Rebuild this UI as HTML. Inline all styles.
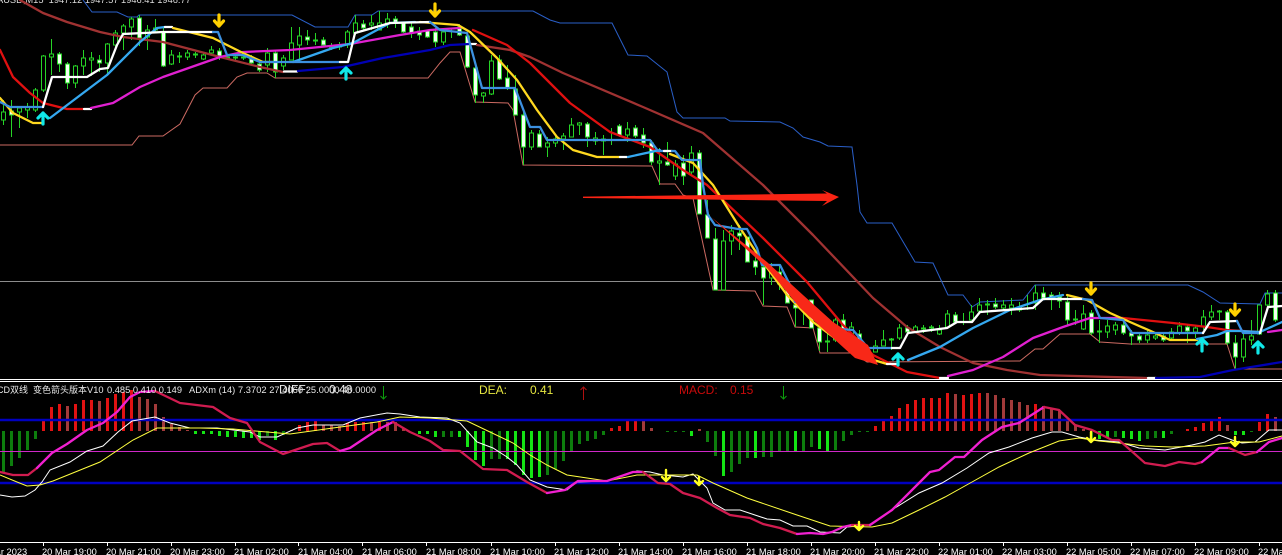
<!DOCTYPE html>
<html lang="zh">
<head>
<meta charset="utf-8">
<title>XAUUSD M15</title>
<style>
html,body{margin:0;padding:0;background:#000;width:1282px;height:555px;overflow:hidden}
svg{display:block}
text{font-family:"Liberation Sans","Noto Sans CJK SC",sans-serif}
.ax text{font-size:9.3px;fill:#fff}
</style>
</head>
<body>
<svg width="1282" height="555" viewBox="0 0 1282 555" xmlns="http://www.w3.org/2000/svg" fill="none">
<rect width="1282" height="555" fill="#000"/>
<text x="-3" y="3" fill="#ddd" style="font-size:9.3px">AUSD,M15&#160;&#160;1947.12 1947.57 1946.41 1946.77</text>

<!-- grey level -->
<path d="M0 281.5H1282" stroke="#8c8c8c"/>

<!-- channels -->
<polyline stroke="#2a5fc8" points="83,0 92,12 117,12 128,17 137,17 139,15 292,15 315,27 348,27 355,15 372,15 378,11 533,11 550,20 560,23 612,23 628,55 647,56 667,72 677,112 683,118 725,118 730,121 780,122 793,128 803,137 820,142 828,146 852,147 857,185 860,212 867,223 892,223 915,262 933,263 948,295 963,295 972,307 980,302 1023,300 1035,285 1188,285 1203,292 1220,303 1260,304 1265,293 1282,293"/>
<polyline stroke="#cc6a62" points="0,145 132,145 139,136 163,136 180,124 195,95 203,88 227,88 237,77 247,73 267,73 275,78 428,78 440,63 450,52 460,52 475,102 508,103 513,110 523,165 652,166 660,184 675,184 683,195 693,198 713,290 755,291 763,306 787,307 795,327 813,328 820,353 853,353 867,362 1020,361 1035,349 1043,349 1060,334 1090,334 1100,342 1130,344 1227,344 1235,369 1282,369"/>

<!-- candles: wicks -->
<path stroke="#26d426" d="M3.5 100V125M11.5 100V137M19.5 108V128M27.5 103V118M35.5 88V112M43.5 55V92M51.5 39V75M59.5 52V72M67.5 62V89M75.5 65V88M83.5 50V75M91.5 52V76M99.5 55V72M107.5 43V73M115.5 30V50M123.5 24V50M131.5 17V40M139.5 15V46M147.5 25V50M155.5 19V33M163.5 28V67M171.5 50V65M179.5 52V63M187.5 50V60M195.5 52V58M203.5 52V60M211.5 46V55M219.5 48V60M227.5 54V60M235.5 55V60M243.5 53V60M251.5 55V65M259.5 60V72M267.5 48V72M275.5 50V78M283.5 55V70M291.5 27V60M299.5 27V62M307.5 30V45M315.5 33V45M323.5 37V46M331.5 43V50M339.5 42V50M347.5 30V48M355.5 15V35M363.5 20V30M371.5 15V30M379.5 11V30M387.5 13V28M395.5 16V28M403.5 22V33M411.5 22V38M419.5 27V40M427.5 30V38M435.5 28V47M443.5 30V45M451.5 28V38M459.5 24V36M467.5 33V68M475.5 65V103M483.5 92V103M491.5 55V95M499.5 55V80M507.5 65V90M515.5 75V115M523.5 112V165M531.5 130V150M539.5 130V147M547.5 137V157M555.5 135V147M563.5 133V150M571.5 118V137M579.5 122V135M587.5 122V147M595.5 132V145M603.5 135V155M611.5 128V145M619.5 124V137M627.5 122V142M635.5 125V138M643.5 128V148M651.5 140V165M659.5 148V185M667.5 142V166M675.5 160V180M683.5 155V185M691.5 146V175M699.5 150V214M707.5 200V238M715.5 228V290M723.5 230V290M731.5 225V255M739.5 225V250M747.5 237V262M755.5 255V275M763.5 260V305M771.5 263V285M779.5 265V290M787.5 285V303M795.5 302V327M803.5 303V325M811.5 300V328M819.5 328V351M827.5 325V352M835.5 318V342M843.5 314V335M851.5 322V348M859.5 330V352M875.5 340V352M883.5 330V346M891.5 338V350M899.5 324V340M907.5 325V335M915.5 325V333M923.5 325V333M931.5 325V332M939.5 325V335M947.5 310V327M955.5 312V324M963.5 313V325M971.5 305V320M979.5 298V312M987.5 300V315M995.5 298V309M1003.5 300V310M1011.5 298V315M1019.5 302V312M1027.5 295V310M1035.5 285V310M1043.5 287V300M1051.5 292V310M1059.5 292V308M1067.5 295V325M1075.5 310V325M1083.5 305V330M1091.5 310V335M1099.5 320V343M1107.5 320V338M1115.5 322V335M1123.5 320V335M1131.5 330V345M1139.5 332V343M1147.5 330V343M1155.5 333V340M1163.5 333V342M1171.5 328V340M1179.5 322V335M1187.5 325V343M1195.5 326V338M1203.5 310V330M1211.5 305V320M1219.5 310V320M1227.5 310V345M1235.5 335V369M1243.5 330V362M1251.5 320V345M1259.5 305V335M1267.5 290V310M1275.5 290V322"/>
<!-- hollow bodies -->
<path fill="#000" stroke="#26d426" d="M1.5 112h4v8h-4zM17.5 108h4v4h-4zM25.5 107h4v3h-4zM33.5 90h4v20h-4zM41.5 56h4v34h-4zM49.5 54h4v3h-4zM73.5 66h4v17h-4zM81.5 58h4v8h-4zM89.5 58h4v2h-4zM105.5 44h4v19h-4zM113.5 33h4v12h-4zM121.5 26h4v7h-4zM129.5 19h4v8h-4zM145.5 30h4v7h-4zM153.5 28h4v2h-4zM169.5 55h4v9h-4zM177.5 56h4v1h-4zM185.5 53h4v4h-4zM193.5 54h4v1h-4zM201.5 55h4v4h-4zM209.5 50h4v3h-4zM225.5 57h4v1h-4zM233.5 57h4v1h-4zM241.5 57h4v1h-4zM265.5 53h4v12h-4zM281.5 58h4v8h-4zM289.5 43h4v17h-4zM297.5 36h4v9h-4zM313.5 40h4v1h-4zM345.5 32h4v13h-4zM353.5 23h4v10h-4zM369.5 23h4v2h-4zM377.5 23h4v7h-4zM385.5 19h4v4h-4zM441.5 32h4v10h-4zM481.5 93h4v3h-4zM489.5 61h4v33h-4zM529.5 133h4v14h-4zM545.5 143h4v4h-4zM553.5 139h4v4h-4zM561.5 136h4v3h-4zM569.5 125h4v12h-4zM577.5 123h4v2h-4zM593.5 138h4v3h-4zM601.5 139h4v2h-4zM625.5 129h4v6h-4zM657.5 161h4v2h-4zM673.5 164h4v12h-4zM689.5 153h4v19h-4zM721.5 241h4v49h-4zM729.5 231h4v10h-4zM769.5 270h4v8h-4zM801.5 305h4v5h-4zM833.5 320h4v20h-4zM849.5 327h4v18h-4zM873.5 346h4v6h-4zM881.5 340h4v6h-4zM897.5 328h4v10h-4zM913.5 327h4v5h-4zM921.5 328h4v1h-4zM929.5 327h4v1h-4zM937.5 330h4v4h-4zM945.5 314h4v13h-4zM969.5 312h4v8h-4zM977.5 305h4v6h-4zM1001.5 305h4v3h-4zM1009.5 305h4v3h-4zM1017.5 307h4v3h-4zM1033.5 293h4v10h-4zM1081.5 314h4v15h-4zM1097.5 331h4v1h-4zM1105.5 326h4v6h-4zM1113.5 325h4v5h-4zM1145.5 335h4v5h-4zM1153.5 336h4v2h-4zM1169.5 332h4v6h-4zM1177.5 326h4v7h-4zM1193.5 328h4v4h-4zM1201.5 317h4v9h-4zM1209.5 312h4v5h-4zM1217.5 311h4v1h-4zM1241.5 339h4v18h-4zM1249.5 336h4v4h-4zM1257.5 305h4v29h-4zM1265.5 294h4v11h-4z"/>
<!-- white bodies -->
<path fill="#f2fff0" stroke="#26d426" d="M9.5 111h4v4h-4zM57.5 54h4v10h-4zM65.5 64h4v19h-4zM97.5 60h4v3h-4zM137.5 18h4v20h-4zM161.5 32h4v34h-4zM217.5 51h4v5h-4zM249.5 59h4v4h-4zM257.5 64h4v6h-4zM273.5 53h4v19h-4zM305.5 37h4v3h-4zM321.5 40h4v5h-4zM329.5 47h4v1h-4zM337.5 45h4v2h-4zM361.5 24h4v4h-4zM393.5 19h4v4h-4zM401.5 23h4v9h-4zM409.5 27h4v6h-4zM417.5 31h4v4h-4zM425.5 31h4v6h-4zM433.5 32h4v10h-4zM457.5 27h4v8h-4zM465.5 36h4v31h-4zM473.5 68h4v27h-4zM497.5 60h4v19h-4zM505.5 78h4v10h-4zM513.5 89h4v26h-4zM521.5 115h4v32h-4zM537.5 134h4v13h-4zM585.5 124h4v13h-4zM617.5 126h4v9h-4zM633.5 128h4v8h-4zM641.5 135h4v8h-4zM649.5 143h4v19h-4zM665.5 162h4v3h-4zM681.5 163h4v13h-4zM697.5 153h4v61h-4zM705.5 215h4v23h-4zM713.5 239h4v51h-4zM737.5 233h4v3h-4zM745.5 237h4v25h-4zM753.5 261h4v6h-4zM761.5 267h4v11h-4zM777.5 272h4v12h-4zM785.5 290h4v13h-4zM793.5 305h4v3h-4zM809.5 300h4v28h-4zM817.5 328h4v14h-4zM841.5 320h4v12h-4zM857.5 334h4v16h-4zM905.5 328h4v4h-4zM953.5 315h4v7h-4zM993.5 304h4v3h-4zM1041.5 293h4v5h-4zM1049.5 295h4v3h-4zM1057.5 297h4v4h-4zM1065.5 302h4v18h-4zM1089.5 313h4v20h-4zM1121.5 325h4v8h-4zM1129.5 333h4v3h-4zM1137.5 336h4v4h-4zM1161.5 336h4v4h-4zM1185.5 327h4v4h-4zM1225.5 312h4v31h-4zM1233.5 343h4v14h-4zM1273.5 293h4v27h-4z"/>
<path fill="#26d426" stroke="#26d426" d="M825.5 341h4v1h-4zM889.5 339h4v1h-4zM985.5 304h4v1h-4zM1073.5 319h4v1h-4z"/>

<!-- moving averages -->
<g stroke-width="2.3" stroke-linejoin="round" stroke-linecap="round">
 <!-- dark red long MA -->
 <polyline stroke="#a03232" points="20,0 43,13 67,22 100,32 123,37 163,42 220,57 260,67 283,72"/>
 <path stroke="#fff" d="M284 71.5H297"/>
 <polyline stroke="#0000b4" points="298,71 343,67 383,58 430,50 450,45 470,44"/>
 <path stroke="#fff" d="M470 44H476"/>
 <polyline stroke="#a03232" points="477,45 510,50 530,57 563,73 643,107 703,133 763,185 813,235 873,298 907,327 940,347 973,363 1007,370 1040,375 1147,378"/>
 <path stroke="#fff" d="M1148 378H1156"/>
 <polyline stroke="#0000b4" points="1156,378 1200,377 1233,370 1282,362"/>

 <!-- red / magenta mid MA -->
 <polyline stroke="#e01010" points="0,50 13,77 30,93 43,103 67,109 83,109"/>
 <path stroke="#fff" d="M84 109H91"/>
 <polyline stroke="#e020d0" points="91,108 113,103 140,87 163,77 220,57 243,52 290,50 350,44 400,35 430,30 460,28"/>
 <polyline stroke="#e01010" points="473,30 507,45 530,63 570,103 610,132 650,147 683,170 707,185 763,238 807,282 843,325 873,355 907,372 940,378"/>
 <path stroke="#fff" d="M940 378H948"/>
 <polyline stroke="#e020d0" points="948,376 973,370 1003,357 1033,338 1063,327 1090,318 1123,318"/>
 <polyline stroke="#e01010" points="1123,318 1173,323 1207,327 1227,330 1260,332"/>
 <polyline stroke="#e020d0" points="1268,332 1282,330"/>

 <!-- yellow / cyan fast MA -->
 <polyline stroke="#ffd820" points="0,98 13,113 33,123 42,123"/>
 <polyline stroke="#35a8f0" points="50,118 107,75 140,42 157,28 165,27"/>
 <path stroke="#fff" d="M165 27H172"/>
 <polyline stroke="#ffd820" points="173,28 213,38 243,53 263,62 273,62"/>
 <polyline stroke="#35a8f0" points="293,62 333,48 353,43 390,23 415,22"/>
 <polyline stroke="#ffd820" points="420,22 458,25 470,32 497,58 517,80 537,110 557,137 573,150 597,157 620,157"/>
 <path stroke="#fff" d="M620 157H627"/>
 <polyline stroke="#35a8f0" points="628,157 660,150"/>
 <polyline stroke="#ffd820" points="670,154 693,163 713,185 740,228 760,258 787,295 813,322 840,342 867,358 887,364"/>
 <path stroke="#fff" d="M887 364H898"/>
 <polyline stroke="#35a8f0" points="908,360 940,347 973,328 1010,310 1040,300 1063,295"/>
 <polyline stroke="#ffd820" points="1067,295 1087,300 1110,313 1130,322 1153,332 1170,340 1197,340"/>
 <polyline stroke="#35a8f0" points="1197,339 1217,335 1227,331 1240,331 1260,332 1282,322"/>

 <!-- step line -->
 <polyline stroke="#3c90e0" points="0,102 10,107 43,107"/>
 <polyline stroke="#fff" points="43,107 52,77 87,77 100,69 108,68 117,45 123,34 163,32 213,32"/>
 <polyline stroke="#3c90e0" points="213,32 218,32 227,55 243,55 260,62 340,62"/>
 <polyline stroke="#fff" points="340,62 348,62 355,33 390,23 430,22"/>
 <polyline stroke="#3c90e0" points="430,22 440,30 467,33 482,88 515,88 530,127 540,127 547,140 650,140 658,151 668,151"/>
 <path stroke="#fff" d="M664 151H672"/>
 <polyline stroke="#3c90e0" points="672,151 675,151 682,160 700,160 703,185 708,215 715,225 738,229 747,229 757,248 762,265 780,265 790,285 795,302 803,303 827,328 853,330 868,348 892,348"/>
 <polyline stroke="#fff" points="892,348 900,348 908,333 947,328 957,322 972,322 980,312 1033,308 1043,299 1083,299"/>
 <polyline stroke="#3c90e0" points="1083,299 1092,300 1100,318 1123,320 1132,333 1203,333"/>
 <polyline stroke="#fff" points="1203,333 1210,322 1237,321"/>
 <polyline stroke="#3c90e0" points="1237,321 1243,333 1260,333"/>
 <polyline stroke="#fff" points="1260,333 1268,307 1282,306"/>
</g>

<!-- hand drawn arrows -->
<polygon fill="#fa2414" points="583,196.6 827,193.5 822,190 839,197 822,206 827,201 583,198"/>
<polygon fill="#f82818" points="711,217 767,262 803,295 833,322 868,345 878,365 855,358 833,338 800,308 767,268"/>

<!-- signal arrows -->
<g stroke="#ffd000" stroke-width="3.2" stroke-linecap="round" stroke-linejoin="round">
 <path d="M219 15V26M214.500 21 219 26 223.500 21"/>
 <path d="M435 4V16M430.500 11 435 16 439.500 11"/>
 <path d="M1091 283V294M1086.500 289 1091 294 1095.500 289"/>
 <path d="M1235 304V315M1230.500 310 1235 315 1239.500 310"/>
</g>
<g stroke="#10e8e8" stroke-width="3.2" stroke-linecap="round" stroke-linejoin="round">
 <path d="M43 124V113M38 118 43 113 48 118"/>
 <path d="M346 79V68M341 73 346 68 351 73"/>
 <path d="M898 365V354M893 359 898 354 903 359"/>
 <path d="M1202 351V339M1197 344 1202 339 1207 344"/>
 <path d="M1258 353V342M1253 347 1258 342 1263 347"/>
</g>

<!-- pane separators -->
<path stroke="#fff" d="M0 379.500H1282M0 381.500H1282"/>

<!-- MACD histogram -->
<g stroke-width="3">
 <path stroke="#0d7d0d" d="M3.500 431v41M11.500 431v35M19.500 431v27M27.500 431v19M35.500 431v8M267.500 431v5M283.500 431v4M443.500 431v6M451.500 431v6M491.500 431v28M499.500 431v28M547.500 431v44M555.500 431v38M563.500 431v30M571.500 431v20M579.500 431v13M587.500 431v10M595.500 431v8M603.500 431v4M667.500 431v1M675.500 431v1M683.500 431v1M707.500 431v11M715.500 431v25M731.500 431v41M739.500 431v33M747.500 431v27M763.500 431v26M771.500 431v26M779.500 431v21M787.500 431v20M803.500 431v20M811.500 431v16M835.500 431v19M843.500 431v10M851.500 431v4M859.500 431v1M867.500 431v1M1091.500 431v10M1115.500 431v6M1147.500 431v8M1155.500 431v7M1171.500 431v3M1251.500 431v1"/>
 <path stroke="#14e414" d="M195.500 431v3M203.500 431v3M211.500 431v3M219.500 431v5M227.500 431v6M235.500 431v6M243.500 431v7M251.500 431v7M259.500 431v9M275.500 431v9M419.500 431v3M427.500 431v3M435.500 431v6M459.500 431v6M467.500 431v16M475.500 431v29M483.500 431v35M507.500 431v28M515.500 431v34M523.500 431v44M531.500 431v47M539.500 431v46M691.500 431v5M723.500 431v45M755.500 431v27M795.500 431v20M819.500 431v18M827.500 431v20M1099.500 431v8M1107.500 431v7M1123.500 431v7M1131.500 431v8M1139.500 431v10M1163.500 431v7M1235.500 431v4M1243.500 431v4"/>
 <path stroke="#e21212" d="M43.500 431v-10M51.500 431v-24M59.500 431v-27M75.500 431v-27M83.500 431v-31M91.500 431v-31M107.500 431v-33M115.500 431v-37M123.500 431v-39M131.500 431v-41M299.500 431v-6M307.500 431v-9M315.500 431v-10M347.500 431v-8M355.500 431v-9M363.500 431v-9M379.500 431v-9M611.500 431v-3M619.500 431v-5M627.500 431v-10M635.500 431v-10M875.500 431v-5M883.500 431v-10M891.500 431v-15M899.500 431v-23M907.500 431v-27M915.500 431v-31M923.500 431v-33M931.500 431v-33M939.500 431v-33M947.500 431v-38M963.500 431v-36M971.500 431v-37M979.500 431v-38M1035.500 431v-27M1187.500 431v-2M1195.500 431v-4M1203.500 431v-8M1211.500 431v-10M1219.500 431v-14M1259.500 431v-9M1267.500 431v-17"/>
 <path stroke="#a23a3a" d="M67.500 431v-25M99.500 431v-30M139.500 431v-34M147.500 431v-32M155.500 431v-27M163.500 431v-14M171.500 431v-7M179.500 431v-4M187.500 431v-1M291.500 431v-1M323.500 431v-6M331.500 431v-6M339.500 431v-5M371.500 431v-9M387.500 431v-9M395.500 431v-9M403.500 431v-3M643.500 431v-10M651.500 431v-3M699.500 431v-2M955.500 431v-37M987.500 431v-38M995.500 431v-36M1003.500 431v-33M1011.500 431v-31M1019.500 431v-29M1027.500 431v-26M1043.500 431v-25M1051.500 431v-22M1059.500 431v-20M1067.500 431v-10M1075.500 431v-6M1083.500 431v-2M1227.500 431v-6M1275.500 431v-14"/>
</g>

<!-- pane levels -->
<path stroke="#0000c0" stroke-width="2.6" d="M0 420H1282M0 483H1282"/>
<path stroke="#d028c8" d="M0 451.500H1282"/>

<!-- thin DIF/DEA lines -->
<polyline stroke="#fff" points="0,495 12,497 25,496 35,490 42,482 50,470 70,462 87,451 103,446 118,432 132,421 155,417 170,423 190,428 217,428 250,432 260,437 277,437 297,428 313,425 343,425 360,418 387,413 400,414 420,417 447,418 460,423 477,442 493,448 507,457 517,465 530,480 547,487 567,490 577,482 607,481 637,471 650,472 663,475 683,477 693,474 707,488 713,503 725,510 740,510 767,519 780,520 793,526 807,526 820,532 840,533 847,527 869,525 895,508 919,493 942,483 967,468 989,453 1009,447 1032,438 1052,432 1062,432 1079,437 1095,440 1119,442 1139,448 1165,450 1192,445 1205,442 1219,435 1232,440 1242,443 1255,442 1269,430 1282,430"/>
<polyline stroke="#ffff40" points="0,475 17,482 27,486 40,485 53,481 100,462 133,440 157,428 200,428 233,429 267,432 290,434 333,428 377,422 400,417 430,418 467,421 490,432 513,443 530,455 547,465 567,475 607,481 637,475 663,475 697,475 713,483 747,498 797,515 830,526 872,527 892,523 919,510 945,497 972,482 999,467 1029,453 1059,441 1079,438 1099,441 1119,443 1145,446 1172,447 1205,446 1235,442 1259,442 1282,436"/>

<!-- MACD thick -->
<g stroke-width="2.3" stroke-linejoin="round" stroke-linecap="round">
 <polyline stroke="#d01c50" points="0,472 13,475 28,475 37,468"/>
 <polyline stroke="#f020d0" points="37,468 52,453 67,444 87,430 103,423 117,412 130,397 140,392 155,391"/>
 <polyline stroke="#d01c50" points="155,391 180,403 213,407 230,418 247,423 260,442 283,454 313,444 327,443 340,451"/>
 <polyline stroke="#f020d0" points="340,451 350,448 377,430 393,422"/>
 <polyline stroke="#d01c50" points="393,422 410,432 430,441 443,450 460,451 483,469 507,470 527,482 547,493"/>
 <polyline stroke="#f020d0" points="547,493 565,490 578,481 607,481 633,472 643,472"/>
 <polyline stroke="#d01c50" points="643,472 658,483 670,484 683,493 700,498 717,508 730,515 750,518 763,524 780,528 797,534"/>
 <polyline stroke="#f020d0" points="797,534 810,533 823,534 832,532 843,527 852,525"/>
 <polyline stroke="#d01c50" points="852,525 870,525"/>
 <polyline stroke="#f020d0" points="870,525 892,510 917,485 930,472 939,470 955,457 964,457 982,440 1002,427 1019,423 1044,407"/>
 <polyline stroke="#d01c50" points="1044,407 1059,410 1075,425 1092,430 1112,440 1119,440 1145,463 1165,466 1179,462 1195,464 1202,462"/>
 <polyline stroke="#f020d0" points="1202,462 1219,448 1229,448"/>
 <polyline stroke="#d01c50" points="1229,448 1245,455 1257,452"/>
 <polyline stroke="#f020d0" points="1257,452 1269,442 1282,438"/>
</g>

<!-- small yellow arrows -->
<g stroke="#ffff20" stroke-width="2.4" stroke-linecap="round" stroke-linejoin="round">
 <path d="M666 470V481M662 477 666 481 670 477"/>
 <path d="M699 477V485M695 481 699 485 703 481"/>
 <path d="M859 522V530M855 526 859 530 863 526"/>
 <path d="M1091 432V442M1087 438 1091 442 1095 438"/>
 <path d="M1235 437V446M1231 442 1235 446 1239 442"/>
</g>

<!-- pane header -->
<text x="-3" y="393" fill="#e8e8e8" style="font-size:9px">CD双线</text>
<text x="33" y="393" fill="#e8e8e8" style="font-size:9px">变色箭头版本</text>
<text x="87" y="393" fill="#e8e8e8" style="font-size:9.3px">V10</text>
<text x="107" y="393" fill="#e8e8e8" style="font-size:9.3px" textLength="75">0.485 0.410 0.149</text>
<text x="189" y="393" fill="#e8e8e8" style="font-size:9.3px" textLength="187">ADXm (14) 7.3702 27.4060 25.0000 40.0000</text>
<text x="279" y="393.500" fill="#e8e8e8" style="font-size:12px">DIFF:</text>
<text x="329" y="393.500" fill="#e8e8e8" style="font-size:12px">0.48</text>
<text x="479" y="394" fill="#e6e640" style="font-size:12px">DEA:</text>
<text x="530" y="394" fill="#e6e640" style="font-size:12px">0.41</text>
<text x="679" y="394" fill="#c80a0a" style="font-size:12px">MACD:</text>
<text x="730" y="394" fill="#c80a0a" style="font-size:12px">0.15</text>
<path stroke="#0c9c0c" d="M383.500 386V399M380.500 396 383.500 399 386.500 396"/>
<path stroke="#b01010" d="M583.500 400V387M580.500 390 583.500 387 586.500 390"/>
<path stroke="#0c9c0c" d="M783.500 386V399M780.500 396 783.500 399 786.500 396"/>

<!-- time axis -->
<path stroke="#fff" d="M0 542.500H1282M43.500 542V546M107.500 542V546M171.500 542V546M235.500 542V546M298.500 542V546M362.500 542V546M426.500 542V546M491.500 542V546M555.500 542V546M619.500 542V546M683.500 542V546M747.500 542V546M811.500 542V546M875.500 542V546M939.500 542V546M1003.500 542V546M1067.500 542V546M1131.500 542V546M1195.500 542V546M1259.500 542V546"/>
<g class="ax">
 <text x="-25" y="555">20 Mar 2023</text>
 <text x="42" y="555">20 Mar 19:00</text>
 <text x="106" y="555">20 Mar 21:00</text>
 <text x="170" y="555">20 Mar 23:00</text>
 <text x="234" y="555">21 Mar 02:00</text>
 <text x="298" y="555">21 Mar 04:00</text>
 <text x="362" y="555">21 Mar 06:00</text>
 <text x="426" y="555">21 Mar 08:00</text>
 <text x="490" y="555">21 Mar 10:00</text>
 <text x="554" y="555">21 Mar 12:00</text>
 <text x="618" y="555">21 Mar 14:00</text>
 <text x="682" y="555">21 Mar 16:00</text>
 <text x="746" y="555">21 Mar 18:00</text>
 <text x="810" y="555">21 Mar 20:00</text>
 <text x="874" y="555">21 Mar 22:00</text>
 <text x="938" y="555">22 Mar 01:00</text>
 <text x="1002" y="555">22 Mar 03:00</text>
 <text x="1066" y="555">22 Mar 05:00</text>
 <text x="1130" y="555">22 Mar 07:00</text>
 <text x="1194" y="555">22 Mar 09:00</text>
 <text x="1258" y="555">22 Mar 11:00</text>
</g>
</svg>
</body>
</html>
